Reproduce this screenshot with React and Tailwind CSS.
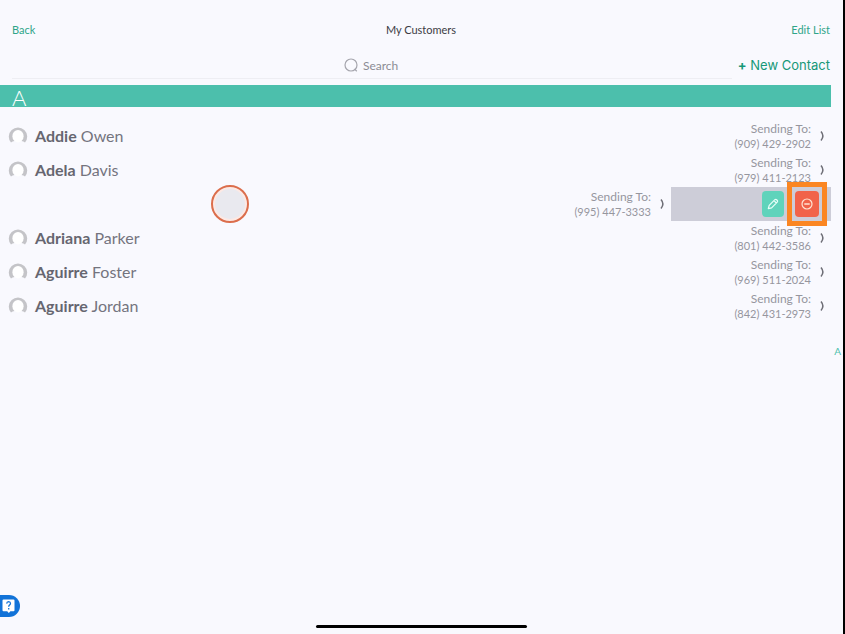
const customers = [
  { first: "Addie", last: "Owen", phone: "(909) 429-2902" },
  { first: "Adela", last: "Davis", phone: "(979) 411-2123" },
  { phone: "(995) 447-3333", swiped: true },
  { first: "Adriana", last: "Parker", phone: "(801) 442-3586" },
  { first: "Aguirre", last: "Foster", phone: "(969) 511-2024" },
  { first: "Aguirre", last: "Jordan", phone: "(842) 431-2973" },
];

function Avatar() {
  return (
    <svg className="w-5 h-5 shrink-0" viewBox="0 0 20 20" aria-hidden="true">
      <path
        d="M3 16.6A9.2 9.2 0 1 1 17 16.6Q15.5 15.4 13.6 15H6.4Q4.5 15.4 3 16.6Z"
        fill="#c4c4c8"
      />
      <ellipse cx="10" cy="10.2" rx="5.6" ry="6.2" fill="#fff" />
    </svg>
  );
}

function Chevron() {
  return (
    <svg className="w-2 h-3" viewBox="0 0 8 12" fill="none" aria-hidden="true">
      <path d="M3 1.5Q6.8 6 3 10.5" stroke="#6e6e76" strokeWidth="1.5" />
    </svg>
  );
}

function SwipeActions() {
  return (
    <div className="flex w-40 shrink-0 items-center justify-end gap-[11px] bg-[#cdcdd8] pr-3">
      <button
        aria-label="Edit contact"
        className="flex h-[26px] w-[22px] items-center justify-center rounded bg-[#5fd3bb]"
      >
        <svg className="w-3 h-3" viewBox="0 0 12 12" fill="none" stroke="#e9fff9" aria-hidden="true">
          <path d="M1.3 10.7L2.2 7.4L7.9 1.7Q8.8 .9 9.9 2Q11.1 3.2 10.2 4.1L4.6 9.8ZM7 2.7L9.3 5" strokeWidth="1.2" strokeLinejoin="round" />
        </svg>
      </button>
      <button
        aria-label="Remove contact"
        className="relative flex h-[26px] w-6 items-center justify-center rounded bg-[#f1634a]"
      >
        <svg className="w-3 h-3" viewBox="0 0 12 12" fill="none" stroke="#ffe3d3" aria-hidden="true">
          <circle cx="6" cy="6" r="5" strokeWidth="1.2" />
          <path d="M3.3 6H8.7" strokeWidth="1.5" />
        </svg>
        <span className="pointer-events-none absolute -inset-x-2 -inset-y-[9px] z-10 border-[5px] border-[#fb8622]" />
      </button>
    </div>
  );
}

function CustomerRow({ customer }) {
  return (
    <li className="flex h-[34px]">
      <div className="flex min-w-0 flex-1 items-center pl-2 pr-[5px]">
        {customer.swiped ? (
          <span className="ml-[203px] h-[38px] w-[38px] rounded-full border-2 border-[#dc6e4c] bg-[#e9e9ef] ring-2 ring-inset ring-[#fde9e4]" />
        ) : (
          <>
            <Avatar />
            <span className="ml-[7px] text-[16px] leading-5 text-[#74747e]">
              <b className="font-bold text-[#666670]">{customer.first}</b> {customer.last}
            </span>
          </>
        )}
        <p className="ml-auto text-right text-[#96969e]">
          <span className="block text-[12px] leading-[15px]">Sending To:</span>
          <span className="block text-[11px] leading-[15px]">{customer.phone}</span>
        </p>
        <span className="ml-[7px]">
          <Chevron />
        </span>
      </div>
      {customer.swiped && <SwipeActions />}
    </li>
  );
}

export default function App() {
  return (
    <div className="relative flex min-h-screen flex-col border-r-2 border-black bg-[#f9f9fe] font-['Lato',sans-serif]">
      <header className="grid grid-cols-3 items-center pl-3 pr-[13px] pt-5 text-[11px] leading-5">
        <button className="justify-self-start text-[#2fa589]">Back</button>
        <h1 className="text-center text-[#3c3c44]">My Customers</h1>
        <button className="justify-self-end text-[#2fa589]">Edit List</button>
      </header>

      <div className="mt-[13px] flex items-start pl-3 pr-[13px]">
        <label className="flex h-[26px] flex-1 items-start justify-center border-b border-[#eeeef3]">
          <svg className="mt-1 w-4 h-4" viewBox="0 0 16 16" fill="none" stroke="#a5a5ad" strokeWidth="1.2" aria-hidden="true">
            <circle cx="8" cy="8" r="6" />
            <path d="M11.5 12L13.8 14.2" />
          </svg>
          <input
            type="text"
            aria-label="Search"
            placeholder="Search"
            className="ml-1 h-6 w-[38px] text-[12px] text-[#70707a] placeholder-[#8c8c94] outline-none"
          />
        </label>
        <button className="ml-[6px] font-['Inter',sans-serif] text-[13px] leading-6 text-[#169878]">
          <b>+</b> New Contact
        </button>
      </div>

      <main className="mt-[6px] pr-3">
        <h2 className="h-[22px] bg-[#4cbfac] pl-3 text-[22px] font-light leading-[26px] text-white">
          A
        </h2>
        <ul className="pt-3">
          {customers.map((customer) => (
            <CustomerRow key={customer.phone} customer={customer} />
          ))}
        </ul>
      </main>

      <a href="#A" className="mr-[2px] mt-5 self-end text-[10px] leading-4 text-[#4cbfac]">
        A
      </a>

      <footer className="mt-auto">
        <button
          aria-label="Help"
          className="flex h-[22px] w-5 items-center rounded-r-full bg-[#1273d8] pl-[2px]"
        >
          <svg className="w-[14px] h-[14px]" viewBox="0 0 14 14" aria-hidden="true">
            <path d="M1.5 .5H11.5Q12.5 .5 12.5 1.5V11.2Q12.5 12.2 11.5 12.2H8.4L6.8 14L5.2 12.2H1.5Q.5 12.2 .5 11.2V1.5Q.5 .5 1.5 .5Z" fill="#fff" />
            <path d="M4.7 4.6Q4.8 2.7 6.6 2.7Q8.5 2.8 8.5 4.5Q8.4 5.5 7.4 6.1Q6.7 6.6 6.7 7.8M6.7 9V10.4" fill="none" stroke="#1273d8" strokeWidth="1.3" />
          </svg>
        </button>
        <div className="mx-auto mb-[6px] mt-2 h-[3px] w-1/4 rounded-full bg-black" />
      </footer>
    </div>
  );
}
